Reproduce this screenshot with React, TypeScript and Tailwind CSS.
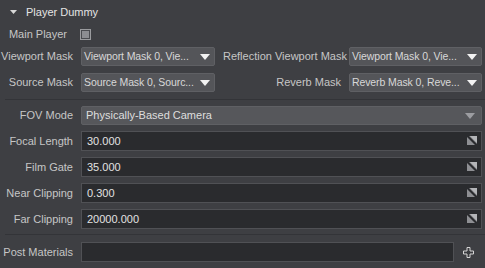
import React from 'react';

const font = { fontFamily: '"Liberation Sans", Arial, sans-serif' };

function Caret({ dim }: { dim?: boolean }) {
  return (
    <svg width="10" height="6" viewBox="0 0 10 6" className="shrink-0">
      <path d="M0 0 H10 L5 6 Z" fill={dim ? '#9c9da1' : '#f2f2f2'} />
    </svg>
  );
}

function ResizeIcon() {
  return (
    <svg width="10" height="10" viewBox="0 0 10 10" className="shrink-0">
      <path d="M0 1 L8 9 H0 Z" fill="#8e8f93" />
      <path d="M2 0 H10 V8 Z" fill="#8e8f93" />
      <path d="M3 0 H10 V7 Z" fill="#b4b5b8" />
    </svg>
  );
}

function Mask({ text }: { text: string }) {
  return (
    <div className="flex h-[19px] min-w-0 items-center justify-between gap-[2px] overflow-hidden rounded-[2px] border border-[#5f6064] bg-[#545559] pl-[2px] pr-[4px] whitespace-nowrap text-[10.5px] tracking-[-0.1px] text-[#d8d8d8]">
      <span>{text}</span>
      <Caret />
    </div>
  );
}

function NumberRow({ label, value }: { label: string; value: string }) {
  return (
    <div className="flex h-[20px] items-center">
      <div className="w-[73px] shrink-0 whitespace-nowrap text-right text-[#c6c6c6]">{label}</div>
      <div className="ml-[8px] mr-[3px] flex h-[20px] flex-1 items-center justify-between border border-[#505155] bg-[#2a2b2e] pl-[5px] pr-[4px] text-[#e2e2e2]">
        <span>{value}</span>
        <ResizeIcon />
      </div>
    </div>
  );
}

export default function App() {
  return (
    <div className="h-[268px] w-[485px] overflow-hidden bg-[#3e3f43] text-[11px] leading-none" style={font}>
      {/* header */}
      <div className="flex h-[24px] items-center pl-[10px] text-[#e4e4e4]">
        <svg width="7" height="4" viewBox="0 0 7 4" className="mr-[9px]">
          <path d="M0 0 H7 L3.5 4 Z" fill="#d8d8d8" />
        </svg>
        Player Dummy
      </div>

      <div className="flex h-[20px] items-center">
        <div className="w-[67px] shrink-0 whitespace-nowrap text-right text-[#c6c6c6]">Main Player</div>
        <div className="ml-[13px] flex h-[11px] w-[11px] items-center justify-center border border-[#9a9b9e] bg-[#4a4b4f]">
          <div className="h-[7px] w-[7px] bg-[#8c8d91]" />
        </div>
      </div>

      <div className="mt-[3px] grid grid-cols-[73px_134px_minmax(0,1fr)_133px] items-center gap-x-[8px] gap-y-[7px] pr-[3px] whitespace-nowrap">
        <div className="text-right text-[#c6c6c6]">Viewport Mask</div>
        <Mask text="Viewport Mask 0, Vie..." />
        <div className="text-right text-[#c6c6c6]">Reflection Viewport Mask</div>
        <Mask text="Viewport Mask 0, Vie..." />
        <div className="text-right text-[#c6c6c6]">Source Mask</div>
        <Mask text="Source Mask 0, Sourc..." />
        <div className="text-right text-[#c6c6c6]">Reverb Mask</div>
        <Mask text="Reverb Mask 0, Reve..." />
      </div>

      <div className="ml-[5px] mt-[7px] h-px bg-[#333438]" />

      <div className="mt-[6px] flex h-[19px] items-center">
        <div className="w-[73px] shrink-0 text-right text-[#c6c6c6]">FOV Mode</div>
        <div className="ml-[8px] mr-[3px] flex h-[19px] flex-1 items-center justify-between rounded-[2px] border border-[#5f6064] bg-[#56575b] pl-[4px] pr-[6px] text-[#dedede]">
          <span>Physically-Based Camera</span>
          <Caret dim />
        </div>
      </div>

      <div className="mt-[6px] flex flex-col gap-[6px]">
        <NumberRow label="Focal Length" value="30.000" />
        <NumberRow label="Film Gate" value="35.000" />
        <NumberRow label="Near Clipping" value="0.300" />
        <NumberRow label="Far Clipping" value="20000.000" />
      </div>

      <div className="ml-[5px] mt-[5px] h-px bg-[#333438]" />

      <div className="mt-[7px] flex h-[20px] items-center">
        <div className="w-[73px] shrink-0 whitespace-nowrap text-right text-[#c6c6c6]">Post Materials</div>
        <div className="ml-[8px] h-[20px] w-[373px] border border-[#505155] bg-[#2a2b2e]" />
        <svg width="11" height="11" viewBox="0 0 11 11" className="ml-[9px]">
          <path d="M4 0.5 H7 V4 H10.5 V7 H7 V10.5 H4 V7 H0.5 V4 H4 Z" fill="#3a3b3f" stroke="#d6d6d6" strokeWidth="1" />
        </svg>
      </div>
    </div>
  );
}
